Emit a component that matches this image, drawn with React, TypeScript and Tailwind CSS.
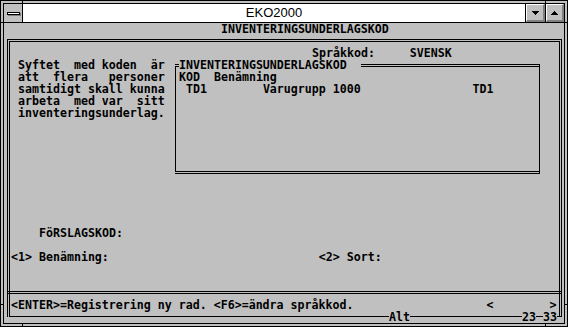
import React from "react";

const Down = () => (
  <svg width="7" height="4" viewBox="0 0 7 4">
    <path d="M0 0H7V1H6V2H5V3H4V4H3V3H2V2H1V1H0Z" fill="black" />
  </svg>
);
const Up = () => (
  <svg width="7" height="4" viewBox="0 0 7 4">
    <path d="M3 0H4V1H5V2H6V3H7V4H0V3H1V2H2V1H3Z" fill="black" />
  </svg>
);

export default function App() {
  return (
    <div className="relative w-[568px] h-[327px] border border-black bg-[#c0c0c0] p-[2px]">
      <div className="w-full h-full border border-black flex flex-col">
        {/* title bar */}
        <div className="flex h-[19px] border-b border-black shrink-0">
          <div className="w-[19px] border-r border-black bg-[#c0c0c0] flex items-center justify-center">
            <div className="w-[13px] h-[3px] border border-black bg-white shadow-[1px_1px_0_#808080]" />
          </div>
          <div className="flex-1 bg-white border-r border-black flex items-center justify-center font-['Liberation_Sans',Arial,sans-serif] text-[13px] text-black">
            EKO2000
          </div>
          <div className="w-[20px] border-r border-black flex">
            <div className="flex-1 bg-[#c0c0c0] border-t border-l border-white border-b-2 border-r-2 border-b-[#808080] border-r-[#808080] flex items-center justify-center">
              <Down />
            </div>
          </div>
          <div className="w-[18px] flex">
            <div className="flex-1 bg-[#c0c0c0] border-t border-l border-white border-b-2 border-r-2 border-b-[#808080] border-r-[#808080] flex items-center justify-center">
              <Up />
            </div>
          </div>
        </div>

        {/* DOS client */}
        <div className="flex-1 bg-[#c0c0c0] flex flex-col font-['DejaVu_Sans_Mono',monospace] font-bold text-[11.627px] leading-[12px] whitespace-pre text-black overflow-hidden">
          <div className="h-[12px] pl-[217px]">INVENTERINGSUNDERLAGSKOD</div>
          <div className="relative mt-[4px] ml-[3px] w-[555px] h-[278px] border-x-[3px] border-t-[3px] border-b border-double border-black pt-[5px] pl-[1px] flex flex-col">
            <div className="h-[12px] pl-[301px]">{"Språkkod:     SVENSK"}</div>
            <div className="flex h-[120px] items-start">
              <div className="w-[164px] pl-[7px] flex flex-col">
                <div className="h-[12px]">{"Syftet  med koden  är"}</div>
                <div className="h-[12px]">{"att  flera   personer"}</div>
                <div className="h-[12px]">{"samtidigt skall kunna"}</div>
                <div className="h-[12px]">{"arbeta  med var  sitt"}</div>
                <div className="h-[12px]">{"inventeringsunderlag."}</div>
              </div>
              <fieldset className="w-[365px] h-[115px] border-x border-y-[3px] border-double border-black">
                <legend className="ml-[3px] pr-[14px] h-[12px] leading-[12px]">INVENTERINGSUNDERLAGSKOD</legend>
                <div className="pl-[3px] flex flex-col">
                  <div className="h-[12px]">{"KOD  Benämning"}</div>
                  <div className="h-[12px] pl-[7px]">{"TD1        Varugrupp 1000                TD1"}</div>
                </div>
              </fieldset>
            </div>
            <div className="h-[12px] mt-[48px] pl-[28px]">FöRSLAGSKOD:</div>
            <div className="h-[12px] mt-[12px] flex">
              <span>{"<1> Benämning:"}</span>
              <span className="ml-[210px]">{"<2> Sort:"}</span>
            </div>
            <div className="-ml-[3px] -mr-[2px] h-[3px] mt-[28px] border-y border-black" />
            <div className="h-[12px] mt-[5px] flex">
              <span>{"<ENTER>=Registrering ny rad. <F6>=ändra språkkod."}</span>
              <span className="ml-[133px]">{"<"}</span>
              <span className="ml-[56px]">{">"}</span>
            </div>
            <span className="absolute left-[379px] top-[269px] h-[12px] bg-[#c0c0c0]">Alt</span>
            <span className="absolute left-[512px] top-[269px] h-[12px] bg-[#c0c0c0]">23</span>
            <span className="absolute left-[533px] top-[269px] h-[12px] bg-[#c0c0c0]">33</span>
          </div>
        </div>
      </div>

      {/* sizing border ticks */}
      <div className="absolute left-[21px] -top-px w-px h-[4px] bg-black" />
      <div className="absolute left-[544px] -top-px w-px h-[4px] bg-black" />
      <div className="absolute left-[21px] -bottom-px w-px h-[4px] bg-black" />
      <div className="absolute left-[544px] -bottom-px w-px h-[4px] bg-black" />
      <div className="absolute -left-px top-[21px] w-[4px] h-px bg-black" />
      <div className="absolute -left-px top-[303px] w-[4px] h-px bg-black" />
      <div className="absolute -right-px top-[21px] w-[4px] h-px bg-black" />
      <div className="absolute -right-px top-[303px] w-[4px] h-px bg-black" />
    </div>
  );
}
